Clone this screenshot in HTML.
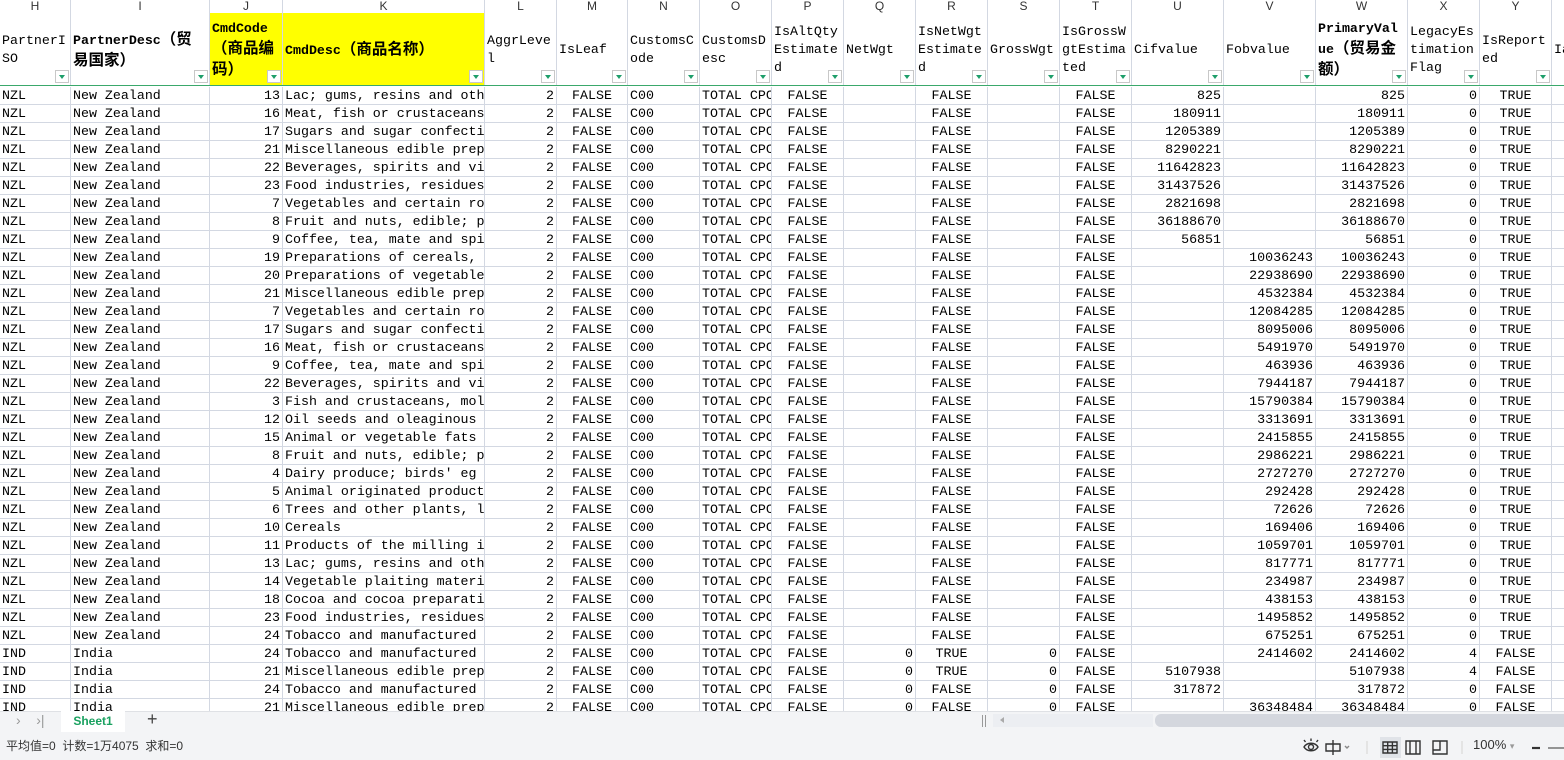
<!DOCTYPE html>
<html><head><meta charset="utf-8"><style>
*{margin:0;padding:0;box-sizing:border-box}
body{width:1564px;height:760px;overflow:hidden;background:#fff;position:relative;font-family:"Liberation Mono","Noto Sans CJK SC",monospace;font-size:13.3px;color:#000}
.c{position:absolute;overflow:hidden;white-space:nowrap;border-right:1px solid #d3d8e2;border-bottom:1px solid #d3d8e2;height:18px;line-height:18px;padding:0 2px}
.r{text-align:right}.m{text-align:center}
.L{position:absolute;top:0;height:13px;line-height:12px;text-align:center;font-family:"Liberation Sans",sans-serif;font-size:12px;color:#333;background:#fff;border-right:1px solid #d3d8e2;overflow:hidden}
.h{position:absolute;top:13px;height:73px;border-right:1px solid #d3d8e2;overflow:hidden;display:flex;align-items:center;padding:0 2px;line-height:18px;white-space:normal;word-break:break-all}
.h i{font-style:normal;font-size:15.5px;font-family:"Noto Sans CJK SC",sans-serif}
.f{position:absolute;width:14px;height:13px;border:1px solid #c8c8c8;background:#fff}
.f:after{content:"";position:absolute;left:3px;top:4px;border-left:3.5px solid transparent;border-right:3.5px solid transparent;border-top:4px solid #1e9e6a}
</style></head><body>
<div id="g"></div>
<div style="position:absolute;left:0;top:85px;width:1564px;height:1px;background:#3aa86b"></div>
<div style="position:absolute;left:0;top:711px;width:1564px;height:21px;background:#f3f4f6;border-top:1px solid #dfe1e5"></div>
<div style="position:absolute;left:16px;top:712px;color:#999;font-family:'Liberation Sans';font-size:14px">›&nbsp;&nbsp;&nbsp;&nbsp;›|</div>
<div style="position:absolute;left:61px;top:711px;width:64px;height:21px;background:#fff;color:#1aa160;font-family:'Liberation Sans';font-weight:bold;font-size:12px;text-align:center;line-height:20px">Sheet1</div>
<div style="position:absolute;left:147px;top:709px;color:#444;font-family:'Liberation Sans';font-size:18px">+</div>
<div style="position:absolute;left:982px;top:715px;width:1px;height:12px;background:#999"></div><div style="position:absolute;left:985px;top:715px;width:1px;height:12px;background:#999"></div>
<div style="position:absolute;left:993px;top:714px;width:160px;height:13px;background:#eceef2"></div>
<div style="position:absolute;left:1000px;top:717px;border-right:4px solid #aaa;border-top:3px solid transparent;border-bottom:3px solid transparent"></div>
<div style="position:absolute;left:1155px;top:714px;width:420px;height:13px;background:#d4d7de;border-radius:6px"></div>
<div style="position:absolute;left:0;top:732px;width:1564px;height:28px;background:#f3f4f6"></div>
<div style="position:absolute;left:6px;top:737px;font-family:'Liberation Sans','Noto Sans CJK SC',sans-serif;font-size:12px;color:#333">平均值=0&nbsp; 计数=1万4075&nbsp; 求和=0</div>
<svg style="position:absolute;left:1295px;top:734px" width="269" height="26" viewBox="0 0 269 26" fill="none" stroke="#333" stroke-width="1.4">
<path d="M9 13c3-5 11-5 14 0c-3 5-11 5-14 0z"/><circle cx="16" cy="13" r="2.5"/><path d="M10.5 8l-1.5-2M16 7V4.5M21.5 8l1.5-2"/>
<path d="M31 10h14v7H31zM38 6v15"/><path d="M50 12l2 2 2-2" stroke="#888"/>
<path d="M72 7v13" stroke="#ddd"/>
<rect x="85" y="3" width="21" height="21" fill="#e0e3e8" stroke="none"/>
<path d="M88 8h14v11H88zM88 11.7h14M88 15.4h14M92.7 8v11M97.4 8v11"/>
<path d="M111 7h14v13H111zM115 7v13M121 7v13"/>
<path d="M138 7h14v13H138zM138 16h7V7"/>
<path d="M167 7v13" stroke="#ddd"/>
<path d="M237 14h8" stroke-width="2.2"/><path d="M253 14h20" stroke-width="1"/>
</svg>
<div style="position:absolute;left:1473px;top:737px;font-family:'Liberation Sans';font-size:13px;color:#333">100% <span style="color:#999;font-size:9px">▾</span></div>
<script>
var X=[0,71,210,283,485,557,628,700,772,844,916,988,1060,1132,1224,1316,1408,1480,1552,1640];
var letters="HIJKLMNOPQRSTUVWXYZ".split("");
var hd=["PartnerISO","<b>PartnerDesc<i>（贸易国家）</i></b>","<b>CmdCode<i>（商品编码）</i></b>","<b>CmdDesc<i>（商品名称）</i></b>","AggrLevel","IsLeaf","CustomsCode","CustomsDesc","IsAltQtyEstimated","NetWgt","IsNetWgtEstimated","GrossWgt","IsGrossWgtEstimated","Cifvalue","Fobvalue","<b>PrimaryValue<i>（贸易金额）</i></b>","LegacyEstimationFlag","IsReported","Ia"];
var K={3:"Fish and crustaceans, mol",4:"Dairy produce; birds' eg",5:"Animal originated product",6:"Trees and other plants, l",7:"Vegetables and certain ro",8:"Fruit and nuts, edible; p",9:"Coffee, tea, mate and spi",10:"Cereals",11:"Products of the milling i",12:"Oil seeds and oleaginous",13:"Lac; gums, resins and oth",14:"Vegetable plaiting materi",15:"Animal or vegetable fats",16:"Meat, fish or crustaceans",17:"Sugars and sugar confecti",18:"Cocoa and cocoa preparati",19:"Preparations of cereals,",20:"Preparations of vegetable",21:"Miscellaneous edible prep",22:"Beverages, spirits and vi",23:"Food industries, residues",24:"Tobacco and manufactured"};
var rows=[[13,825,""],[16,180911,""],[17,1205389,""],[21,8290221,""],[22,11642823,""],[23,31437526,""],[7,2821698,""],[8,36188670,""],[9,56851,""],[19,"",10036243],[20,"",22938690],[21,"",4532384],[7,"",12084285],[17,"",8095006],[16,"",5491970],[9,"",463936],[22,"",7944187],[3,"",15790384],[12,"",3313691],[15,"",2415855],[8,"",2986221],[4,"",2727270],[5,"",292428],[6,"",72626],[10,"",169406],[11,"",1059701],[13,"",817771],[14,"",234987],[18,"",438153],[23,"",1495852],[24,"",675251]];
var h="";
for(var i=0;i<19;i++){var w=X[i+1]-X[i];
h+='<div class="L" style="left:'+X[i]+'px;width:'+w+'px">'+letters[i]+'</div>';
var bg=(i==2||i==3)?"background:#ffff00;":"";
h+='<div class="h" style="left:'+X[i]+'px;width:'+w+'px;'+bg+'">'+hd[i]+'</div>';
if(i<18)h+='<div class="f" style="left:'+(X[i+1]-16)+'px;top:70px"></div>';}
function cell(i,y,t,cls){h+='<div class="c '+(cls||"")+'" style="left:'+X[i]+'px;top:'+y+'px;width:'+(X[i+1]-X[i])+'px">'+t+'</div>';}
var all=[];
rows.forEach(function(r){var w=r[1]||r[2];all.push(["NZL","New Zealand",r[0],"","FALSE","",r[1],r[2],w,0,"TRUE"]);});
all.push(["IND","India",24,0,"TRUE",0,"",2414602,2414602,4,"FALSE"]);
all.push(["IND","India",21,0,"TRUE",0,5107938,"",5107938,4,"FALSE"]);
all.push(["IND","India",24,0,"FALSE",0,317872,"",317872,0,"FALSE"]);
all.push(["IND","India",21,0,"FALSE",0,"",36348484,36348484,0,"FALSE"]);
all.forEach(function(d,n){var y=87+n*18;
cell(0,y,d[0]);cell(1,y,d[1]);cell(2,y,d[2],"r");cell(3,y,K[d[2]]);cell(4,y,2,"r");cell(5,y,"FALSE","m");cell(6,y,"C00");cell(7,y,"TOTAL CPC");cell(8,y,"FALSE","m");
cell(9,y,d[3],"r");cell(10,y,d[4],"m");cell(11,y,d[5],"r");cell(12,y,"FALSE","m");cell(13,y,d[6],"r");cell(14,y,d[7],"r");cell(15,y,d[8],"r");cell(16,y,d[9],"r");cell(17,y,d[10],"m");cell(18,y,"");});
document.getElementById("g").innerHTML=h;
</script>
</body></html>
